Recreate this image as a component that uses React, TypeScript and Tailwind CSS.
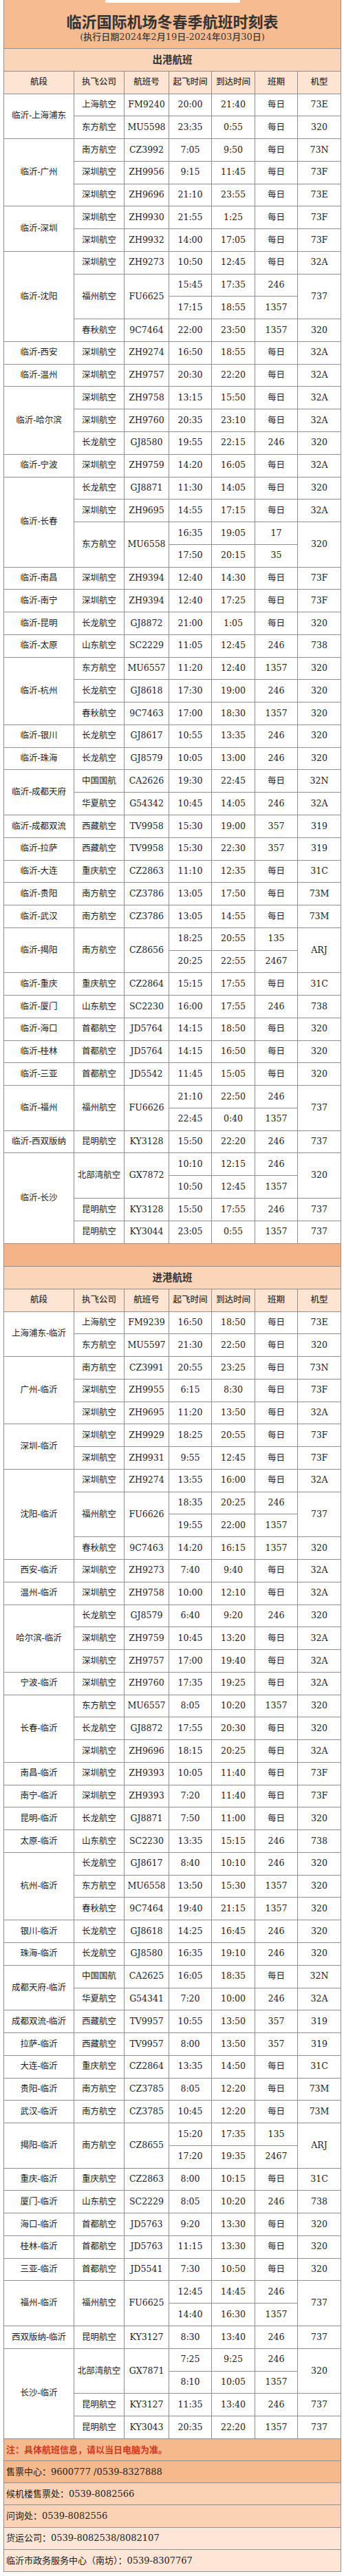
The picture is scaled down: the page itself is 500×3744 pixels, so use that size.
import React from "react";

type Flight = { airline: string; no: string; type: string; times: string[][] };

const outbound: [string, string[]][] = [
  ["临沂-上海浦东", ["上海航空|FM9240|20:00,21:40,每日|73E", "东方航空|MU5598|23:35,0:55,每日|320"]],
  ["临沂-广州", ["南方航空|CZ3992|7:05,9:50,每日|73N", "深圳航空|ZH9956|9:15,11:45,每日|73F", "深圳航空|ZH9696|21:10,23:55,每日|73E"]],
  ["临沂-深圳", ["深圳航空|ZH9930|21:55,1:25,每日|73F", "深圳航空|ZH9932|14:00,17:05,每日|73F"]],
  ["临沂-沈阳", ["深圳航空|ZH9273|10:50,12:45,每日|32A", "福州航空|FU6625|15:45,17:35,246;17:15,18:55,1357|737", "春秋航空|9C7464|22:00,23:50,1357|320"]],
  ["临沂-西安", ["深圳航空|ZH9274|16:50,18:55,每日|32A"]],
  ["临沂-温州", ["深圳航空|ZH9757|20:30,22:20,每日|32A"]],
  ["临沂-哈尔滨", ["深圳航空|ZH9758|13:15,15:50,每日|32A", "深圳航空|ZH9760|20:35,23:10,每日|32A", "长龙航空|GJ8580|19:55,22:15,246|320"]],
  ["临沂-宁波", ["深圳航空|ZH9759|14:20,16:05,每日|32A"]],
  ["临沂-长春", ["长龙航空|GJ8871|11:30,14:05,每日|320", "深圳航空|ZH9695|14:55,17:15,每日|32A", "东方航空|MU6558|16:35,19:05,17;17:50,20:15,35|320"]],
  ["临沂-南昌", ["深圳航空|ZH9394|12:40,14:30,每日|73F"]],
  ["临沂-南宁", ["深圳航空|ZH9394|12:40,17:25,每日|73F"]],
  ["临沂-昆明", ["长龙航空|GJ8872|21:00,1:05,每日|320"]],
  ["临沂-太原", ["山东航空|SC2229|11:05,12:45,246|738"]],
  ["临沂-杭州", ["东方航空|MU6557|11:20,12:40,1357|320", "长龙航空|GJ8618|17:30,19:00,246|320", "春秋航空|9C7463|17:00,18:30,1357|320"]],
  ["临沂-银川", ["长龙航空|GJ8617|10:55,13:35,246|320"]],
  ["临沂-珠海", ["长龙航空|GJ8579|10:05,13:00,246|320"]],
  ["临沂-成都天府", ["中国国航|CA2626|19:30,22:45,每日|32N", "华夏航空|G54342|10:45,14:05,246|32A"]],
  ["临沂-成都双流", ["西藏航空|TV9958|15:30,19:00,357|319"]],
  ["临沂-拉萨", ["西藏航空|TV9958|15:30,22:30,357|319"]],
  ["临沂-大连", ["重庆航空|CZ2863|11:10,12:35,每日|31C"]],
  ["临沂-贵阳", ["南方航空|CZ3786|13:05,17:50,每日|73M"]],
  ["临沂-武汉", ["南方航空|CZ3786|13:05,14:55,每日|73M"]],
  ["临沂-揭阳", ["南方航空|CZ8656|18:25,20:55,135;20:25,22:55,2467|ARJ"]],
  ["临沂-重庆", ["重庆航空|CZ2864|15:15,17:55,每日|31C"]],
  ["临沂-厦门", ["山东航空|SC2230|16:00,17:55,246|738"]],
  ["临沂-海口", ["首都航空|JD5764|14:15,18:50,每日|320"]],
  ["临沂-桂林", ["首都航空|JD5764|14:15,16:50,每日|320"]],
  ["临沂-三亚", ["首都航空|JD5542|11:45,15:05,每日|320"]],
  ["临沂-福州", ["福州航空|FU6626|21:10,22:50,246;22:45,0:40,1357|737"]],
  ["临沂-西双版纳", ["昆明航空|KY3128|15:50,22:20,246|737"]],
  ["临沂-长沙", ["北部湾航空|GX7872|10:10,12:15,246;10:50,12:45,1357|320", "昆明航空|KY3128|15:50,17:55,246|737", "昆明航空|KY3044|23:05,0:55,1357|737"]],
];

const inbound: [string, string[]][] = [
  ["上海浦东-临沂", ["上海航空|FM9239|16:50,18:50,每日|73E", "东方航空|MU5597|21:30,22:50,每日|320"]],
  ["广州-临沂", ["南方航空|CZ3991|20:55,23:25,每日|73N", "深圳航空|ZH9955|6:15,8:30,每日|73F", "深圳航空|ZH9695|11:20,13:50,每日|32A"]],
  ["深圳-临沂", ["深圳航空|ZH9929|18:25,20:55,每日|73F", "深圳航空|ZH9931|9:55,12:45,每日|73F"]],
  ["沈阳-临沂", ["深圳航空|ZH9274|13:55,16:00,每日|32A", "福州航空|FU6626|18:35,20:25,246;19:55,22:00,1357|737", "春秋航空|9C7463|14:20,16:15,1357|320"]],
  ["西安-临沂", ["深圳航空|ZH9273|7:40,9:40,每日|32A"]],
  ["温州-临沂", ["深圳航空|ZH9758|10:00,12:10,每日|32A"]],
  ["哈尔滨-临沂", ["长龙航空|GJ8579|6:40,9:20,246|320", "深圳航空|ZH9759|10:45,13:20,每日|32A", "深圳航空|ZH9757|17:00,19:40,每日|32A"]],
  ["宁波-临沂", ["深圳航空|ZH9760|17:35,19:25,每日|32A"]],
  ["长春-临沂", ["东方航空|MU6557|8:05,10:20,1357|320", "长龙航空|GJ8872|17:55,20:30,每日|320", "深圳航空|ZH9696|18:15,20:25,每日|32A"]],
  ["南昌-临沂", ["深圳航空|ZH9393|10:05,11:40,每日|73F"]],
  ["南宁-临沂", ["深圳航空|ZH9393|7:20,11:40,每日|73F"]],
  ["昆明-临沂", ["长龙航空|GJ8871|7:50,11:00,每日|320"]],
  ["太原-临沂", ["山东航空|SC2230|13:35,15:15,246|738"]],
  ["杭州-临沂", ["长龙航空|GJ8617|8:40,10:10,246|320", "东方航空|MU6558|13:50,15:30,1357|320", "春秋航空|9C7464|19:40,21:15,1357|320"]],
  ["银川-临沂", ["长龙航空|GJ8618|14:25,16:45,246|320"]],
  ["珠海-临沂", ["长龙航空|GJ8580|16:35,19:10,246|320"]],
  ["成都天府-临沂", ["中国国航|CA2625|16:05,18:35,每日|32N", "华夏航空|G54341|7:20,10:00,246|32A"]],
  ["成都双流-临沂", ["西藏航空|TV9957|10:55,13:50,357|319"]],
  ["拉萨-临沂", ["西藏航空|TV9957|8:00,13:50,357|319"]],
  ["大连-临沂", ["重庆航空|CZ2864|13:35,14:50,每日|31C"]],
  ["贵阳-临沂", ["南方航空|CZ3785|8:05,12:20,每日|73M"]],
  ["武汉-临沂", ["南方航空|CZ3785|10:45,12:20,每日|73M"]],
  ["揭阳-临沂", ["南方航空|CZ8655|15:20,17:35,135;17:20,19:35,2467|ARJ"]],
  ["重庆-临沂", ["重庆航空|CZ2863|8:00,10:15,每日|31C"]],
  ["厦门-临沂", ["山东航空|SC2229|8:05,10:20,246|738"]],
  ["海口-临沂", ["首都航空|JD5763|9:20,13:30,每日|320"]],
  ["桂林-临沂", ["首都航空|JD5763|11:15,13:30,每日|320"]],
  ["三亚-临沂", ["首都航空|JD5541|7:30,10:50,每日|320"]],
  ["福州-临沂", ["福州航空|FU6625|12:45,14:45,246;14:40,16:30,1357|737"]],
  ["西双版纳-临沂", ["昆明航空|KY3127|8:30,13:40,246|737"]],
  ["长沙-临沂", ["北部湾航空|GX7871|7:25,9:25,246;8:10,10:05,1357|320", "昆明航空|KY3127|11:35,13:40,246|737", "昆明航空|KY3043|20:35,22:20,1357|737"]],
];

const columns = ["航段", "执飞公司", "航班号", "起飞时间", "到达时间", "班期", "机型"];

const notes = [
  { text: "注：具体航班信息，请以当日电脑为准。", bg: "bg-[#f6b98c]", red: true },
  { text: "售票中心：9600777 /0539-8327888", bg: "bg-[#f6b98c]" },
  { text: "候机楼售票处：0539-8082566", bg: "bg-[#fbd3b4]" },
  { text: "问询处：0539-8082556", bg: "bg-[#fbd3b4]" },
  { text: "货运公司：0539-8082538/8082107", bg: "bg-[#fde6d5]" },
  { text: "临沂市政务服务中心（南坊）：0539-8307767", bg: "bg-[#fde6d5]" },
];

const cell = "border border-[#8f8f8f] p-0 text-center align-middle whitespace-nowrap";

function parse(s: string): Flight {
  const [airline, no, times, type] = s.split("|");
  return { airline, no, type, times: times.split(";").map((t) => t.split(",")) };
}

function sectionHead(title: string) {
  return [
    <tr key={title} className="h-[33px] bg-[#fbd5b8]">
      <td colSpan={7} className={`${cell} text-[14.5px] font-bold text-[#333]`}>
        {title}
      </td>
    </tr>,
    <tr key={title + "-cols"} className="h-[33px] bg-[#fde5d2]">
      {columns.map((c) => (
        <td key={c} className={`${cell} font-medium text-[#333]`}>
          {c}
        </td>
      ))}
    </tr>,
  ];
}

function routeRows(routes: [string, string[]][], prefix: string) {
  return routes.flatMap(([name, list]) => {
    const flights = list.map(parse);
    const total = flights.reduce((n, f) => n + f.times.length, 0);
    const rows: React.ReactNode[] = [];
    flights.forEach((f, fi) =>
      f.times.forEach((t, ti) => {
        const span = f.times.length;
        rows.push(
          <tr key={`${prefix}-${name}-${fi}-${ti}`} className="h-[32.78px] bg-white">
            {fi === 0 && ti === 0 && (
              <td rowSpan={total} className={cell}>
                {name}
              </td>
            )}
            {ti === 0 && (
              <>
                <td rowSpan={span} className={cell}>
                  {f.airline}
                </td>
                <td rowSpan={span} className={cell}>
                  {f.no}
                </td>
              </>
            )}
            <td className={cell}>{t[0]}</td>
            <td className={cell}>{t[1]}</td>
            <td className={cell}>{t[2]}</td>
            {ti === 0 && (
              <td rowSpan={span} className={cell}>
                {f.type}
              </td>
            )}
          </tr>
        );
      })
    );
    return rows;
  });
}

export default function App() {
  return (
    <div className="w-[500px] bg-white px-[5px] pb-[6px] font-['DejaVu_Serif','Noto_Sans_CJK_SC',serif] text-[12.5px] text-[#222]">
      <table className="w-full table-fixed border-collapse">
        <colgroup>
          <col className="w-[102px]" />
          <col className="w-[73px]" />
          <col className="w-[65px]" />
          <col className="w-[62px]" />
          <col className="w-[63px]" />
          <col className="w-[62px]" />
          <col className="w-[63px]" />
        </colgroup>
        <tbody>
          {/* title */}
          <tr className="h-[70px] bg-[#f6bb8e]">
            <td colSpan={7} className="border border-t-0 border-[#8f8f8f] p-0 align-top">
              <div className="flex flex-col items-center">
                <div className="h-[4px] w-[196px] bg-white" />
                <div className="mt-[15px] text-[22px] font-bold leading-[26px] text-[#333]">
                  临沂国际机场冬春季航班时刻表
                </div>
                <div className="text-[13px] font-medium leading-[17px] text-[#3a3a3a]">
                  (执行日期2024年2月19日-2024年03月30日)
                </div>
              </div>
            </td>
          </tr>

          {/* outbound */}
          {sectionHead("出港航班")}
          {routeRows(outbound, "out")}

          {/* divider band */}
          <tr className="h-[33px] bg-[#f5b487]">
            <td colSpan={7} className={cell} />
          </tr>

          {/* inbound */}
          {sectionHead("进港航班")}
          {routeRows(inbound, "in")}

          {/* notes */}
          {notes.map((n) => (
            <tr key={n.text} className={`h-[32.2px] ${n.bg}`}>
              <td
                colSpan={7}
                className={`border border-[#8f8f8f] pl-[3px] text-left align-middle text-[13px] ${
                  n.red ? "font-bold text-[#d8341c]" : "text-[#222]"
                }`}
              >
                {n.text}
              </td>
            </tr>
          ))}
        </tbody>
      </table>
    </div>
  );
}
